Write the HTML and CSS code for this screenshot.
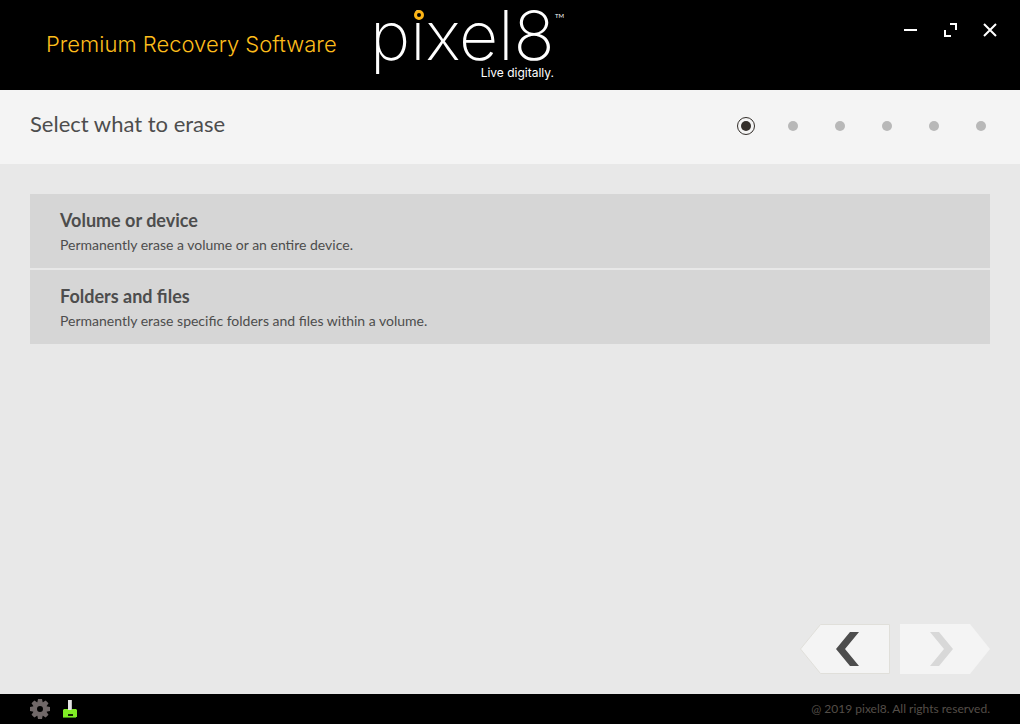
FILE: index.html
```html
<!DOCTYPE html>
<html lang="en">
<head>
  <meta charset="UTF-8" />
  <meta name="viewport" content="width=device-width, initial-scale=1.0" />
  <title>pixel8 - Premium Recovery Software</title>
  <link rel="stylesheet" href="styles.css">
</head>
<body>

  <header class="titlebar">
    <p class="product">Premium Recovery Software</p>
    <div class="logo">
      <span class="logo-name">pixel8</span>
      <span class="logo-ring"></span>
      <span class="logo-tm">TM</span>
      <span class="logo-tagline">Live digitally.</span>
    </div>
    <div class="window-controls">
      <button type="button" aria-label="Minimize">
        <svg width="16" height="16" viewBox="0 0 16 16"><path d="M2 8h13" stroke="#fff" stroke-width="2" /></svg>
      </button>
      <button type="button" aria-label="Restore">
        <svg width="16" height="16" viewBox="0 0 16 16"><path d="M8 2h6v6M3 8v6h6" fill="none" stroke="#fff" stroke-width="2" /></svg>
      </button>
      <button type="button" aria-label="Close">
        <svg width="16" height="16" viewBox="0 0 16 16"><path d="M2 2l12 12M14 2L2 14" stroke="#fff" stroke-width="2" /></svg>
      </button>
    </div>
  </header>

  <section class="step-header">
    <h1>Select what to erase</h1>
    <ol class="steps" aria-label="Progress">
      <li class="current" aria-current="step"></li>
      <li></li>
      <li></li>
      <li></li>
      <li></li>
      <li></li>
    </ol>
  </section>

  <main>
    <div class="options">
      <button type="button" class="option">
        <strong>Volume or device</strong>
        <span>Permanently erase a volume or an entire device.</span>
      </button>
      <button type="button" class="option">
        <strong>Folders and files</strong>
        <span>Permanently erase specific folders and files within a volume.</span>
      </button>
    </div>

    <div class="pager">
      <button type="button" aria-label="Back">
        <svg width="90" height="50" viewBox="0 0 90 50">
          <path d="M.5 25L20.500 .5H89.500V49.500H20.500Z" fill="#f4f4f4" stroke="#e0dfda" />
          <path d="M50 8H59L45 25L59 42H50L36 25Z" fill="#4d4d4d" />
        </svg>
      </button>
      <button type="button" aria-label="Next" disabled>
        <svg width="90" height="50" viewBox="0 0 90 50">
          <path d="M0 0H70L90 25L70 50H0Z" fill="#f4f4f4" />
          <path d="M30 8H39L53 25L39 42H30L44 25Z" fill="#d8d8d8" />
        </svg>
      </button>
    </div>
  </main>

  <footer>
    <div class="tools">
      <button type="button" aria-label="Settings">
        <svg width="20" height="20" viewBox="0 0 20 20">
          <g fill="#706868">
            <path id="teeth" d="M8 0h4l1 5H7zM8 20h4l1-5H7zM0 8v4l5 1V7zM20 8v4l-5 1V7z" />
            <use href="#teeth" transform="rotate(45 10 10)" />
          </g>
          <circle cx="10" cy="10" r="5" fill="none" stroke="#706868" stroke-width="4" />
        </svg>
      </button>
      <button type="button" aria-label="Erase tool">
        <svg width="14" height="18" viewBox="0 0 14 18">
          <path d="M5 0h4v10H5z" fill="#e4e4e4" />
          <path d="M8 0h1v10H8z" fill="#bdbdbd" />
          <path d="M1 9h4v1h4V9h4l1 1v7H0v-7z" fill="#80ed25" />
          <path d="M5 14h5v2H5z" fill="#142606" />
          <path d="M0 17h13v1H0z" fill="#3f8c14" />
        </svg>
      </button>
    </div>
    <small>@ 2019 pixel8. All rights reserved.</small>
  </footer>

</body>
</html>
```
FILE: styles.css
```css
/* Reset and base styles */
* { margin: 0; padding: 0; box-sizing: border-box; }
body {
  display: flex;
  flex-direction: column;
  min-height: 100vh;
  font-family: Lato, sans-serif;
  background: #e8e8e8;
  color: #4d4d4d;
}
button { border: 0; background: none; font: inherit; color: inherit; cursor: pointer; }
button:disabled { cursor: default; }
svg { display: block; }

/* Title bar */
.titlebar { display: flex; align-items: flex-start; height: 90px; padding: 0 20px 0 46px; background: #000; color: #fff; }
.product { width: 324px; padding-top: 32px; font: 300 22px/24px Inter, sans-serif; color: #fdbd1b; white-space: nowrap; }

.logo { position: relative; width: 194px; height: 90px; }
.logo-name { display: block; padding-top: 2px; font: 200 68px/66px Inter, sans-serif; }
.logo-ring { position: absolute; top: 10px; left: 44px; width: 10px; height: 10px; border: 3px solid #fdb515; border-radius: 50%; background: #000; }
.logo-tm { position: absolute; top: 12px; right: 0; font-size: 6px; line-height: 8px; }
.logo-tagline { position: absolute; top: 66px; right: 10px; font: 12px/14px Inter, sans-serif; white-space: nowrap; }

.window-controls { display: flex; gap: 24px; margin-left: auto; padding: 22px 2px 0 0; }

/* Step header */
.step-header { display: flex; justify-content: space-between; height: 74px; padding: 20px 30px; background: #f4f4f4; }
h1 { font-size: 22px; font-weight: 400; line-height: 28px; }
.steps { display: flex; gap: 29px; padding-top: 7px; height: 25px; list-style: none; }
.steps li { display: flex; align-items: center; justify-content: center; width: 18px; height: 18px; border-radius: 50%; }
.steps li::before { content: ""; width: 10px; height: 10px; border-radius: 50%; background: #b8b8b8; }
.steps .current { border: 1px solid #332e2a; }
.steps .current::before { background: #332e2a; }

/* Main content */
main { display: flex; flex: 1; flex-direction: column; justify-content: space-between; padding: 30px 30px 20px; }
.options { display: flex; flex-direction: column; gap: 2px; }
.option { display: flex; flex-direction: column; gap: 4px; padding: 14px 30px; background: #d6d6d6; text-align: left; }
.option:hover { background: #cecece; }
.option strong { font-size: 18px; line-height: 24px; }
.option span { font-size: 14px; line-height: 18px; }
.pager { display: flex; justify-content: flex-end; gap: 10px; }

/* Footer */
footer { display: flex; align-items: center; justify-content: space-between; height: 30px; padding: 0 30px; background: #000; }
.tools { display: flex; align-items: center; gap: 13px; }
footer small { font-size: 12px; line-height: 16px; color: #544e48; }
```
